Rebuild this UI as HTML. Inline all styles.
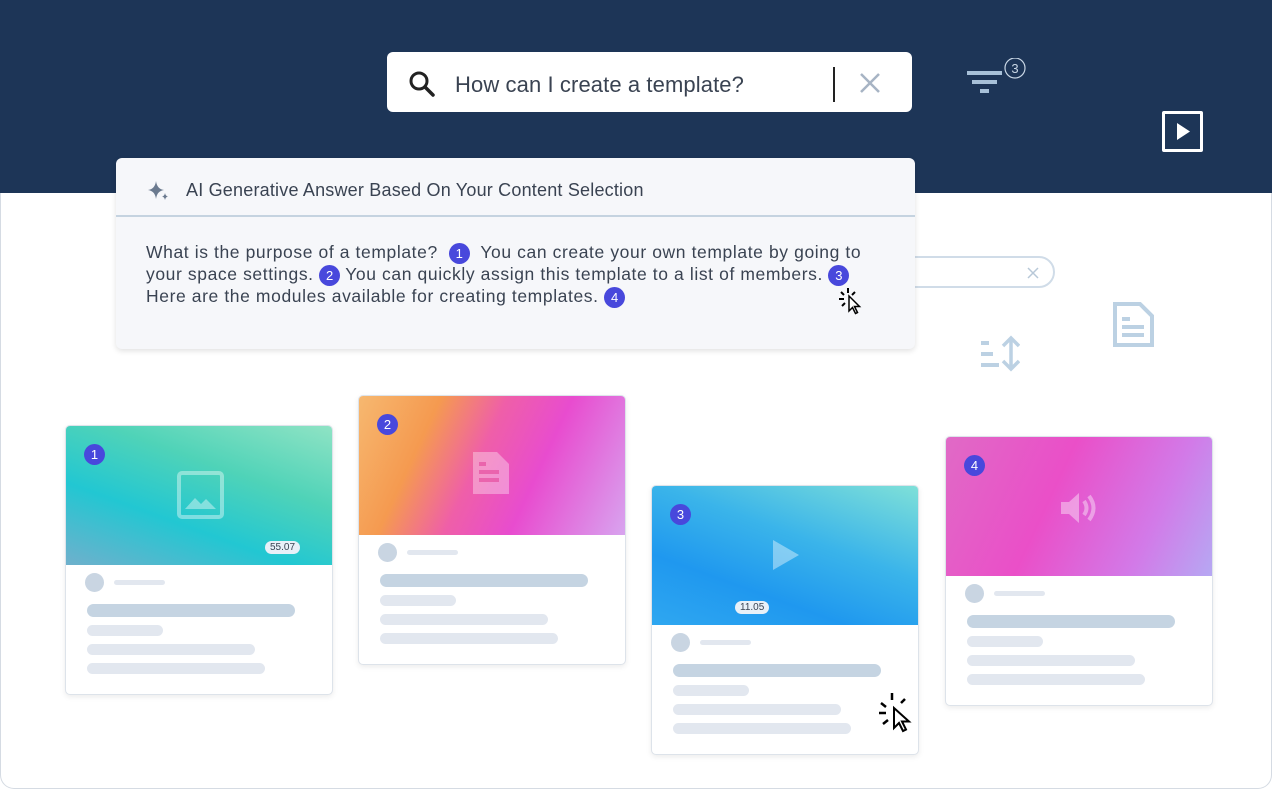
<!DOCTYPE html>
<html><head><meta charset="utf-8"><style>
*{margin:0;padding:0;box-sizing:border-box}
body{width:1272px;height:789px;overflow:hidden;background:#fff;font-family:"Liberation Sans",sans-serif;position:relative}
.top{position:absolute;left:0;top:0;width:1272px;height:193px;background:#1d3557}
.frame{position:absolute;left:0;top:193px;width:1272px;height:596px;border:1px solid #d5dbe3;border-top:none;border-radius:0 0 14px 14px}
.search{position:absolute;left:387px;top:52px;width:525px;height:60px;background:#fff;border-radius:6px}
.search .t{position:absolute;left:68px;top:20px;font-size:22px;color:#3a4352;letter-spacing:0.1px}
.panel{position:absolute;left:116px;top:158px;width:799px;height:191px;background:#f6f7fa;border-radius:6px;box-shadow:0 2px 6px rgba(0,0,0,.12)}
.panel .h{height:59px;border-bottom:2px solid #c5d3e0;font-size:18px;color:#3a4352;padding:22px 0 0 70px;letter-spacing:0.2px}
.panel .b{padding:25px 30px;font-size:17.5px;line-height:21.5px;color:#3a4352;letter-spacing:0.6px;white-space:nowrap}
.n{display:inline-block;width:21px;height:21px;border-radius:50%;background:#4848dc;color:#fff;font-size:13px;text-align:center;line-height:21px;vertical-align:middle;letter-spacing:0}
.card{position:absolute;width:268px;height:270px;background:#fff;border:1px solid #dde3ea;border-radius:5px;overflow:hidden;box-shadow:0 2px 6px rgba(0,0,0,.08)}
.img{height:139px;position:relative}
.card .n{position:absolute;left:18px;top:18px}
.av{position:absolute;left:19px;top:147px;width:19px;height:19px;border-radius:50%;background:#c9d5e2}
.l{position:absolute;left:21px;border-radius:7px;background:#e2e7ef}
.tag{position:absolute;font-size:10px;background:#e8f0f8;color:#3a4352;border-radius:7px;padding:1px 5px}
</style></head><body>
<div class="top"></div>
<div class="frame"></div>
<div class="search">
<svg style="position:absolute;left:20px;top:17px" width="30" height="30" viewBox="0 0 30 30"><circle cx="12" cy="12" r="8" fill="none" stroke="#222" stroke-width="3"/><line x1="18" y1="18" x2="26" y2="26" stroke="#222" stroke-width="3.5" stroke-linecap="round"/></svg>
<div class="t">How can I create a template?</div>
<div style="position:absolute;left:446px;top:15px;width:2px;height:35px;background:#222"></div>
<svg style="position:absolute;left:472px;top:20px" width="22" height="22"><path d="M2 2L20 20M20 2L2 20" stroke="#a7b4c4" stroke-width="2.5"/></svg>
</div>
<svg style="position:absolute;left:964px;top:58px" width="66" height="42"><path d="M3 15h35M8 24h25M16 33h9" stroke="#a7c0d8" stroke-width="4"/><circle cx="51" cy="10" r="10" fill="none" stroke="#c8d6e5" stroke-width="1.2"/><text x="51" y="15" font-size="13" fill="#c8d6e5" text-anchor="middle" font-family="Liberation Sans">3</text></svg>
<div style="position:absolute;left:1162px;top:111px;width:41px;height:41px;border:3px solid #fff;border-radius:2px"><svg width="35" height="35"><path d="M12 9v17l13-8.5z" fill="#fff"/></svg></div>
<div style="position:absolute;left:880px;top:256px;width:175px;height:32px;border:2px solid #d0dce8;border-radius:16px"><svg style="position:absolute;left:145px;top:9px" width="12" height="12"><path d="M1 1L11 11M11 1L1 11" stroke="#b8c8d8" stroke-width="1.5"/></svg></div>
<svg style="position:absolute;left:1112px;top:302px" width="44" height="45"><path d="M3 2h25l12 12v29H3z" fill="none" stroke="#bcd1e3" stroke-width="4"/><path d="M10 17h8M10 25h22M10 33h22" stroke="#bcd1e3" stroke-width="4"/></svg>
<svg style="position:absolute;left:978px;top:335px" width="42" height="38"><path d="M3 8h8M3 19h12M3 30h18" stroke="#bcd1e3" stroke-width="4"/><path d="M33 4v29M25 11l8-8 8 8M25 26l8 8 8-8" fill="none" stroke="#bcd1e3" stroke-width="3.5"/></svg>
<div class="panel">
<svg style="position:absolute;left:30px;top:21px" width="24" height="24"><path d="M10 2Q11 10 18 11Q11 12 10 20Q9 12 2 11Q9 10 10 2z" fill="#6b7a8f"/><path d="M19 14Q19.5 17 22 17.5Q19.5 18 19 21Q18.5 18 16 17.5Q18.5 17 19 14z" fill="#6b7a8f"/></svg>
<div class="h">AI Generative Answer Based On Your Content Selection</div>
<div class="b">What is the purpose of a template? &nbsp;<span class="n">1</span>&nbsp; You can create your own template by going to<br>your space settings. <span class="n">2</span> You can quickly assign this template to a list of members. <span class="n">3</span><br>Here are the modules available for creating templates. <span class="n">4</span></div>
<svg style="position:absolute;left:722px;top:126px" width="26" height="32"><path d="M10 4v5M3 8l3 3M1 15h5M17 8l-3 3M4 22l3-3" stroke="#000" stroke-width="2"/><path d="M11 12v15l3.5-3.5 3 6 2-1-3-6h5z" fill="#fff" stroke="#000" stroke-width="1.5"/></svg>
</div>

<div class="card" style="left:65px;top:425px"><div class="img" style="background:linear-gradient(200deg,#8fe3c4 0%,#4fd3b8 35%,#22c7d2 65%,#6fb0cc 100%)"><span class="n">1</span>
<svg style="position:absolute;left:110px;top:44px" width="50" height="50"><rect x="3" y="3" width="43" height="44" rx="3" fill="none" stroke="rgba(255,255,255,.4)" stroke-width="4"/><path d="M9 39l10-11 6 6 5-5 10 10z" fill="rgba(255,255,255,.4)"/></svg>
<span class="tag" style="left:199px;top:115px">55.07</span></div>
<div class="av"></div><div class="l" style="left:48px;top:154px;width:51px;height:5px"></div>
<div class="l" style="top:178px;width:208px;height:13px;background:#c5d4e2"></div>
<div class="l" style="top:199px;width:76px;height:11px"></div>
<div class="l" style="top:218px;width:168px;height:11px"></div>
<div class="l" style="top:237px;width:178px;height:11px"></div></div>

<div class="card" style="left:358px;top:395px"><div class="img" style="background:linear-gradient(115deg,#f6b870 0%,#f59a50 25%,#ef5fa8 45%,#e84ccf 65%,#d8a4ef 100%)"><span class="n">2</span>
<svg style="position:absolute;left:110px;top:52px" width="48" height="48"><path d="M4 4h24l12 12v30H4z" fill="rgba(255,255,255,.35)"/><path d="M10 16h7M10 24h20M10 32h20" stroke="rgba(230,80,160,.7)" stroke-width="4"/></svg></div>
<div class="av"></div><div class="l" style="left:48px;top:154px;width:51px;height:5px"></div>
<div class="l" style="top:178px;width:208px;height:13px;background:#c5d4e2"></div>
<div class="l" style="top:199px;width:76px;height:11px"></div>
<div class="l" style="top:218px;width:168px;height:11px"></div>
<div class="l" style="top:237px;width:178px;height:11px"></div></div>

<div class="card" style="left:651px;top:485px"><div class="img" style="background:linear-gradient(200deg,#7fe0d8 0%,#3ab4ea 40%,#1f98ef 70%,#2fa7f0 100%)"><span class="n">3</span>
<svg style="position:absolute;left:118px;top:52px" width="34" height="34"><path d="M3 2v30l26-15z" fill="rgba(255,255,255,.4)"/></svg>
<span class="tag" style="left:83px;top:115px">11.05</span></div>
<div class="av"></div><div class="l" style="left:48px;top:154px;width:51px;height:5px"></div>
<div class="l" style="top:178px;width:208px;height:13px;background:#c5d4e2"></div>
<div class="l" style="top:199px;width:76px;height:11px"></div>
<div class="l" style="top:218px;width:168px;height:11px"></div>
<div class="l" style="top:237px;width:178px;height:11px"></div>
<svg style="position:absolute;left:226px;top:205px" width="38" height="44"><path d="M14 2v7M3 12l5 4M1 22h7M27 8l-4 4M5 33l5-4" stroke="#000" stroke-width="2.5"/><path d="M16 17v20l5-5 4 8 3-1.5-4-8h7z" fill="#fff" stroke="#000" stroke-width="2"/></svg></div>

<div class="card" style="left:945px;top:436px"><div class="img" style="background:linear-gradient(115deg,#e06ac6 0%,#ea4fc8 40%,#d27ae8 75%,#b6a8f3 100%)"><span class="n">4</span>
<svg style="position:absolute;left:112px;top:52px" width="44" height="40"><path d="M3 13h8l10-9v30l-10-9H3z" fill="rgba(255,255,255,.4)"/><path d="M26 12q5 7 0 14M31 7q9 12 0 24" fill="none" stroke="rgba(255,255,255,.4)" stroke-width="4"/></svg></div>
<div class="av"></div><div class="l" style="left:48px;top:154px;width:51px;height:5px"></div>
<div class="l" style="top:178px;width:208px;height:13px;background:#c5d4e2"></div>
<div class="l" style="top:199px;width:76px;height:11px"></div>
<div class="l" style="top:218px;width:168px;height:11px"></div>
<div class="l" style="top:237px;width:178px;height:11px"></div></div>
</body></html>
